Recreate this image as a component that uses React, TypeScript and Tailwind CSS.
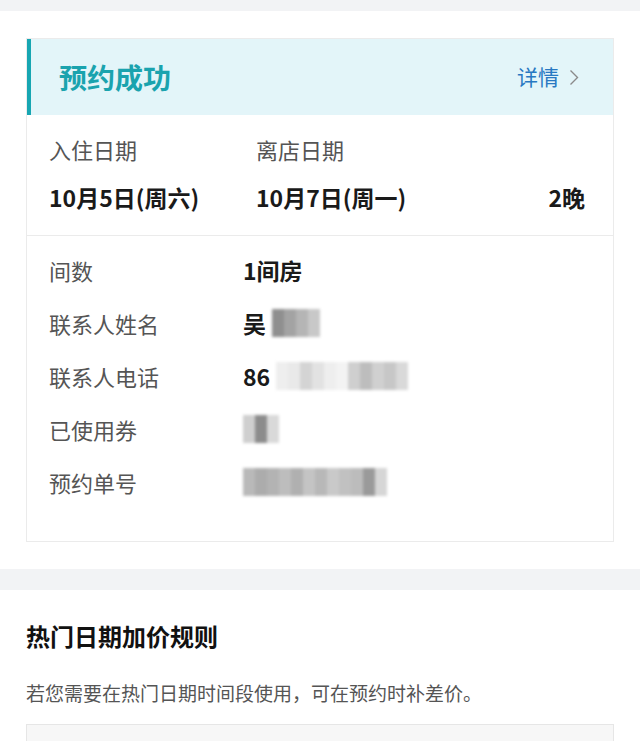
const font = { fontFamily: '"Noto Sans CJK SC", "Noto Sans", sans-serif' };

const rows = [
  { label: "间数", value: "1间房" },
  { label: "联系人姓名", value: "吴", mask: ["#8f8f8f", "#a3a3a3", "#b5b5b5", "#c8c8c8"] },
  { label: "联系人电话", value: "86", mask: ["#eeeeee", "#e9e9e9", "#d4d4d4", "#e2e2e2", "#eeeeee", "#f3f3f3", "#cfcfcf", "#bdbdbd", "#d0d0d0", "#c7c7c7", "#d9d9d9"] },
  { label: "已使用券", value: "", mask: ["#cfcfcf", "#8c8c8c", "#d9d9d9"] },
  { label: "预约单号", value: "", mask: ["#b9b9b9", "#acacac", "#b3b3b3", "#bdbdbd", "#b0b0b0", "#c4c4c4", "#b8b8b8", "#c9c9c9", "#c1c1c1", "#bcbcbc", "#9a9a9a", "#d6d6d6"] },
];

function Mask({ cells, gap }: { cells: string[]; gap: boolean }) {
  return (
    <span className={`inline-flex h-[28px] blur-[1.5px] ${gap ? "ml-[6px]" : ""}`}>
      {cells.map((c, i) => (
        <span key={i} className="h-full w-[12px]" style={{ backgroundColor: c }} />
      ))}
    </span>
  );
}

export default function App() {
  return (
    <div className="min-h-screen bg-white text-[#1a1a1a]" style={font}>
      <div className="h-[11px] bg-[#f2f3f5]" />

      {/* booking card */}
      <div className="px-[26px] pt-[27px] pb-[27px]">
        <div className="border border-[#ebebeb]">
          <div className="flex h-[76px] items-center justify-between border-l-4 border-[#17a6b2] bg-[#e3f5f9] pl-[28px] pr-[34px]">
            <span className="text-[28px] font-bold text-[#1aa3ae]">预约成功</span>
            <span className="flex items-center gap-[10px] text-[21px] text-[#2878c2]">
              详情
              <svg width="10" height="17" viewBox="0 0 10 17" fill="none" stroke="#8a8a8a" strokeWidth="1.4">
                <path d="M1.5 1.5 L8.5 8.5 L1.5 15.5" />
              </svg>
            </span>
          </div>

          <div className="flex items-end px-[22px] pt-[19px] pb-[23px]">
            <div className="w-[207px]">
              <div className="text-[22px] leading-[30px] text-[#555]">入住日期</div>
              <div className="mt-[18px] text-[23px] leading-[30px] font-bold">10月5日(周六)</div>
            </div>
            <div className="flex-1">
              <div className="text-[22px] leading-[30px] text-[#555]">离店日期</div>
              <div className="mt-[18px] text-[23px] leading-[30px] font-bold">10月7日(周一)</div>
            </div>
            <div className="pr-[6px] text-[23px] leading-[30px] font-bold">2晚</div>
          </div>

          <div className="border-t border-[#ebebeb] px-[22px] pt-[19px] pb-[44px]">
            <div className="flex flex-col gap-[23px]">
              {rows.map((r) => (
                <div key={r.label} className="flex h-[30px] items-center">
                  <span className="w-[194px] text-[22px] leading-[30px] text-[#555]">{r.label}</span>
                  <span className="flex items-center text-[23px] leading-[30px] font-bold">
                    {r.value}
                    {r.mask && <Mask cells={r.mask} gap={r.value !== ""} />}
                  </span>
                </div>
              ))}
            </div>
          </div>
        </div>
      </div>

      <div className="h-[21px] bg-[#f2f3f5]" />

      {/* rules section */}
      <div className="px-[26px] pt-[30px]">
        <h2 className="text-[24px] leading-[32px] font-bold text-[#111]">热门日期加价规则</h2>
        <p className="mt-[28px] text-[19px] leading-[26px] text-[#555]">若您需要在热门日期时间段使用，可在预约时补差价。</p>
        <div className="mt-[18px] h-[60px] border border-[#e6e6e6] bg-[#f7f7f7]" />
      </div>
    </div>
  );
}
